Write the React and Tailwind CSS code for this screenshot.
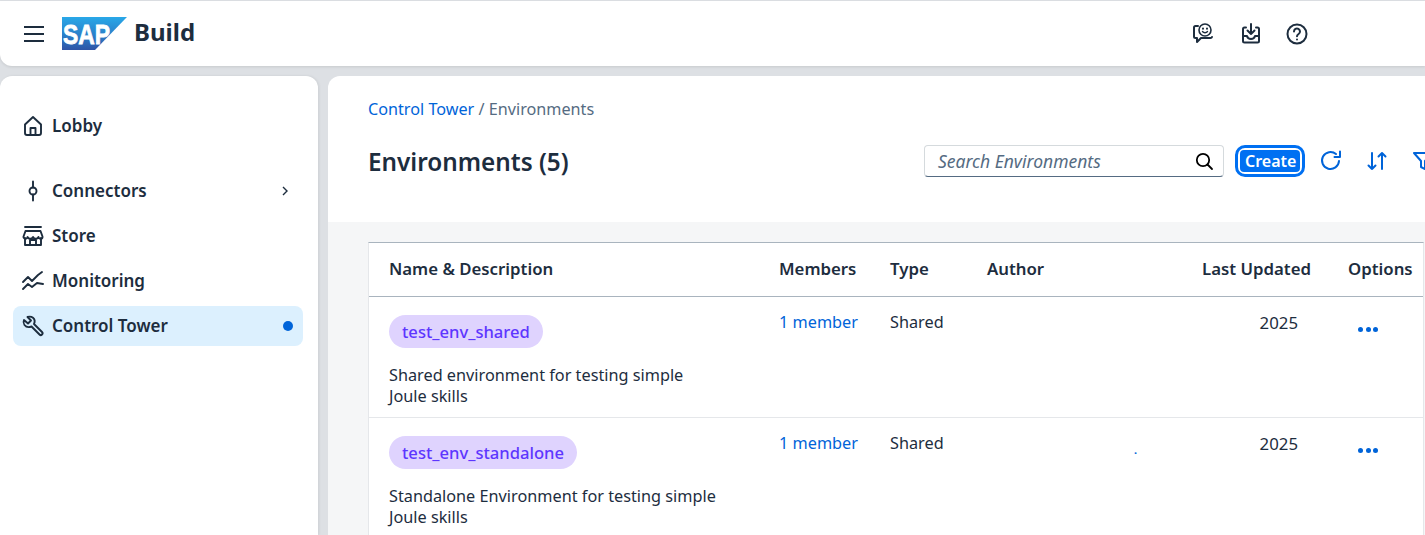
import React from "react";

const COLS = "grid grid-cols-[411px_110px_97px_210px_114px_1fr]";

function Ico({ children, className = "", size = 24, vb = 24, sw = 1.9 }) {
  return (
    <svg width={size} height={size} viewBox={`0 0 ${vb} ${vb}`} fill="none" stroke="currentColor" strokeWidth={sw} strokeLinecap="round" strokeLinejoin="round" className={className}>
      {children}
    </svg>
  );
}

function NavItem({ icon, label, active, chevron }) {
  return (
    <div className={`flex items-center h-10 rounded-lg pl-[8px] pr-[9px] ${active ? "bg-[#dcf0fe]" : ""}`}>
      <span className="w-[24px] h-[24px] flex items-center justify-center text-[#1d2d3e] shrink-0">{icon}</span>
      <span className="ml-[7px] text-[17px] font-semibold text-[#1d2d3e] flex-1">{label}</span>
      {chevron && (
        <svg width="12" height="12" viewBox="0 0 12 12" fill="none" stroke="#1d2d3e" strokeWidth="1.4" className="mr-[3px]"><path d="M4 2l4 4-4 4" /></svg>
      )}
      {active && <span className="w-[10px] h-[10px] rounded-full bg-[#0064d9] mr-[1px]" />}
    </div>
  );
}

function Row({ name, desc, author }) {
  return (
    <div className={`${COLS} h-[121px] border-b border-[#e5e7ea] text-[16.25px] text-[#1d2d3e] leading-[21px]`}>
      <div className="pl-[20px] pt-[18px]">
        <span className="inline-flex items-center h-[33px] pb-[1px] pl-[13px] pr-[13px] rounded-full bg-[#dfd3fe] text-[#5d36ff] font-medium text-[16.6px]">{name}</span>
        <div className="mt-[17px] w-[332px]">{desc}</div>
      </div>
      <div className="pt-[15px] -ml-px text-[#0064d9]">1 member</div>
      <div className="pt-[15px]">Shared</div>
      <div className="pt-[15px] relative">
        {author && <span className="absolute left-[147px] top-[21px] text-[#0064d9] text-[11px] font-bold">.</span>}
      </div>
      <div className="pt-[15px] pr-[13px] text-right text-[16.8px]">2025</div>
      <div className="pt-[30px] pl-[47px]">
        <div className="flex gap-[2.5px] w-fit">
          <span className="w-[5px] h-[5px] rounded-full bg-[#0064d9]" />
          <span className="w-[5px] h-[5px] rounded-full bg-[#0064d9]" />
          <span className="w-[5px] h-[5px] rounded-full bg-[#0064d9]" />
        </div>
      </div>
    </div>
  );
}

export default function App() {
  return (
    <div className="w-[1425px] h-[535px] overflow-hidden bg-[#dde0e4] pt-px font-['Noto_Sans','Open_Sans',sans-serif]">
      <header className="h-[65px] bg-white rounded-bl-xl flex items-center shadow-[0_1px_3px_rgba(0,0,0,0.1)]">
        <div className="ml-[24px] w-[20px] flex flex-col gap-[5px] mt-[1px]">
          <span className="h-[2px] bg-[#1d2d3e]" />
          <span className="h-[2px] bg-[#1d2d3e]" />
          <span className="h-[2px] bg-[#1d2d3e]" />
        </div>
        <svg width="66" height="34" viewBox="0 0 66 34" className="ml-[18px]">
          <defs>
            <linearGradient id="sapg" x1="0" y1="0" x2="0" y2="1">
              <stop offset="0" stopColor="#29a8e8" />
              <stop offset="0.55" stopColor="#2a7fc9" />
              <stop offset="1" stopColor="#2f54a6" />
            </linearGradient>
          </defs>
          <path d="M0 0H65L33 33H0Z" fill="url(#sapg)" />
          <text x="1" y="27" fontSize="28" fontWeight="700" fill="#fff" stroke="#fff" strokeWidth="0.8" fontFamily="Liberation Sans" textLength="47" lengthAdjust="spacingAndGlyphs">SAP</text>
        </svg>
        <span className="ml-[6px] text-[24px] font-bold text-[#1d2d3e] leading-none mb-[3px]">Build</span>
        <div className="ml-auto mr-[116px] flex items-center text-[#1d2d3e]">
          <svg width="24" height="24" viewBox="0 0 24 24" fill="none" stroke="#1d2d3e" strokeWidth="2" strokeLinecap="round" strokeLinejoin="round">
            <path d="M7 4H4.500C3.500 4 3 4.600 3 5.500v9c0 1 .6 1.500 1.500 1.500H6v4l4-4h9.500c.9 0 1.300-.4 1.500-1" />
            <circle cx="14" cy="8" r="6" strokeWidth="1.6" />
            <path d="M11.500 9.500c1.200 1.600 3.800 1.600 5 0" strokeWidth="1.4" />
            <path d="M12 6.500v.3M16 6.500v.3" />
          </svg>
          <svg width="24" height="24" viewBox="0 0 24 24" fill="none" stroke="#1d2d3e" strokeWidth="2" strokeLinecap="round" strokeLinejoin="round" className="ml-[24px]">
            <path d="M7 5.500H5.500C4.500 5.500 4 6 4 7v12c0 1 .6 1.500 1.500 1.500h13c.9 0 1.500-.5 1.500-1.500V7c0-1-.6-1.500-1.500-1.500H17" />
            <path d="M12 2v10M8.500 8.500L12 12l3.500-3.500" />
            <path d="M4 14h4c.5 2 2 3 4 3s3.500-1 4-3h4" />
          </svg>
          <svg width="24" height="24" viewBox="0 0 24 24" fill="none" stroke="#1d2d3e" strokeWidth="2" strokeLinecap="round" strokeLinejoin="round" className="ml-[22px]">
            <circle cx="12" cy="12" r="9.500" />
            <path d="M9 9.500a3 3 0 1 1 4.600 2.500c-1 .7-1.600 1.200-1.600 2.300" />
            <path d="M12 17.500v.1" />
          </svg>
        </div>
      </header>

      <div className="flex gap-[10px] mt-[10px] h-[459px]">
        <aside className="w-[318px] shrink-0 bg-white rounded-t-xl pt-[30px] pl-[13px] pr-[15px] shadow-[1px_0_3px_rgba(0,0,0,0.08)]">
          <NavItem label="Lobby" icon={
            <Ico><path d="M4 10.500L12 3l8 7.500V19a2 2 0 0 1-2 2H6a2 2 0 0 1-2-2z" /><path d="M9.500 21v-7h5v7" /></Ico>
          } />
          <div className="h-[25px]" />
          <NavItem label="Connectors" chevron icon={
            <Ico><circle cx="12" cy="12" r="3.500" /><path d="M12 2.500v6M12 15.500v6" /></Ico>
          } />
          <div className="h-[5px]" />
          <NavItem label="Store" icon={
            <Ico><path d="M4 3h16" /><path d="M4.500 7h15l2 5.500a2 2 0 0 1-4 .5 3 3 0 0 1-5.500 0 3 3 0 0 1-5.500 0 2 2 0 0 1-4-.5z" /><path d="M4 14v7M20 14v7M4 21h16M9 21v-5h6v5" /></Ico>
          } />
          <div className="h-[5px]" />
          <NavItem label="Monitoring" icon={
            <Ico><path d="M2 13l5-5 4 4 6-6 4-3" /><path d="M2 20l5-5 4 3 5-4 6 1" /></Ico>
          } />
          <div className="h-[5px]" />
          <NavItem label="Control Tower" active icon={
            <Ico><path d="M13 10l8 8c.8.8.8 1.700 0 2.500s-1.700.8-2.500 0l-8-8c-2.500 1-5.500.5-7-1.500-1-1.500-1.200-3.500-.5-5L7 9.500l3-3-3.500-3.500c2-.7 4-.4 5.500.8 1.800 1.500 2 4 1 6.200z" /></Ico>
          } />
        </aside>

        <main className="flex-1 min-w-0 bg-white rounded-tl-xl overflow-hidden">
          <div className="h-[146px] pl-[40px] pt-[22px]">
            <div className="text-[16.2px] leading-[22px] text-[#556b82]">
              <span className="text-[#0064d9]">Control Tower</span> / Environments
            </div>
            <div className="flex items-center mt-[24px] h-[36px] w-[1200px]">
              <h1 className="w-[556px] shrink-0 text-[24.3px] font-semibold text-[#1d2d3e] whitespace-nowrap">Environments (5)</h1>
              <div className="w-[300px] shrink-0 h-[32px] rounded-[4px] border border-[#d5dadd] border-b-[#556b82] bg-white flex items-center pl-[13px] pr-[9px] -mt-[2px]">
                <span className="flex-1 italic text-[17.5px] text-[#556b82] whitespace-nowrap">Search Environments</span>
                <svg width="20" height="20" viewBox="0 0 20 20" fill="none" stroke="#000" strokeWidth="1.800" strokeLinecap="round"><circle cx="9" cy="9" r="6.200" /><path d="M13.500 13.500L18 18" /></svg>
              </div>
              <div className="ml-[11px] -mt-[2px] rounded-[10px] border-[3px] border-[#0070f2] p-[2px] bg-white flex shrink-0">
                <span className="h-[22px] pl-[5px] pr-[4px] rounded-[4px] bg-[#0070f2] text-white text-[16px] font-semibold leading-[22px]">Create</span>
              </div>
              <svg width="24" height="24" viewBox="0 0 24 24" fill="none" stroke="#0064d9" strokeWidth="2" strokeLinecap="round" strokeLinejoin="round" className="ml-[14px] -mt-[2px] shrink-0">
                <path d="M20 12a8.500 8.500 0 1 1-3-7" /><path d="M21 2.500V8h-5.500" />
              </svg>
              <svg width="24" height="24" viewBox="0 0 24 24" fill="none" stroke="#0064d9" strokeWidth="2" strokeLinecap="round" strokeLinejoin="round" className="ml-[22px] -mt-[2px] shrink-0">
                <path d="M7 4v16M3.500 16.500L7 20l3.500-3.500" /><path d="M17 20V4M13.500 7.500L17 4l3.500 3.500" />
              </svg>
              <svg width="24" height="24" viewBox="0 0 24 24" fill="none" stroke="#0064d9" strokeWidth="2" strokeLinecap="round" strokeLinejoin="round" className="ml-[22px] -mt-[2px] shrink-0">
                <path d="M3 4h18l-7 8v8l-4-2v-6z" />
              </svg>
            </div>
          </div>
          <div className="h-[313px] bg-[#f5f6f7] pl-[40px] pt-[20px]">
            <div className="w-[1056px] bg-white border-t border-l border-r border-t-[#a9b4be] border-l-[#e5e7ea] border-r-[#e5e7ea]">
              <div className={`${COLS} h-[54px] items-center border-b border-[#a9b4be] text-[16.8px] font-semibold text-[#1d2d3e]`}>
                <div className="pl-[20px] -mt-[2px]">Name &amp; Description</div>
                <div className="-mt-[2px] -ml-px">Members</div>
                <div className="-mt-[2px]">Type</div>
                <div className="-mt-[2px]">Author</div>
                <div className="text-right -mt-[2px]">Last Updated</div>
                <div className="pl-[37px] -mt-[2px]">Options</div>
              </div>
              <Row name="test_env_shared" desc="Shared environment for testing simple Joule skills" />
              <Row name="test_env_standalone" desc="Standalone Environment for testing simple Joule skills" author />
            </div>
          </div>
        </main>
      </div>
    </div>
  );
}
